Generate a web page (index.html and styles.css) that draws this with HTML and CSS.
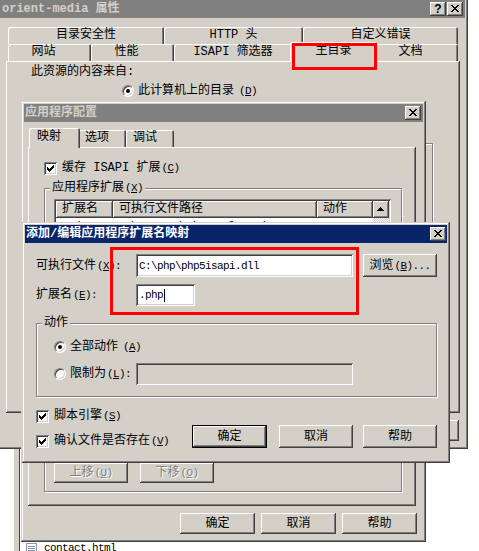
FILE: index.html
```html
<!DOCTYPE html>
<html lang="zh-CN">

<head>
    <meta charset="UTF-8">
    <meta name="viewport" content="width=device-width, initial-scale=1.0">
    <title>orient-media 属性</title>
    <link rel="stylesheet" href="styles.css">
</head>

<body>
    <div class="desk">
        <!-- explorer list behind the dialogs -->
        <div class="pane">
            <div class="file">
                <svg class="doc-icon" width="11" height="12" viewBox="0 0 11 12" shape-rendering="crispEdges">
                    <path d="M0.5 0.5h10v11h-10z" fill="#fff" stroke="#8a94a8" />
                    <path d="M2 3h7M2 5h7M2 7h7M2 9h7" stroke="#7d8fb8" />
                </svg>
                <span class="narrow">contact.html</span>
            </div>
        </div>

        <!-- orient-media 属性 -->
        <div class="win props">
            <div class="titlebar">
                <span class="title">orient-media 属性</span>
                <span class="tbtn help">?</span>
                <span class="tbtn close">
                    <svg width="16" height="14" viewBox="0 0 16 14" shape-rendering="crispEdges">
                        <path d="M4 3h2v1h-2zM10 3h2v1h-2zM5 4h2v1h-2zM9 4h2v1h-2zM6 5h4v1h-4zM7 6h2v1h-2zM6 7h4v1h-4zM5 8h2v1h-2zM9 8h2v1h-2zM4 9h2v1h-2zM10 9h2v1h-2z" />
                    </svg>
                </span>
            </div>
            <div class="props-tabs">
                <div class="tabrow">
                    <div class="tab tab-sec">目录安全性</div>
                    <div class="tab tab-http">HTTP 头</div>
                    <div class="tab tab-err">自定义错误</div>
                </div>
                <div class="tabrow">
                    <div class="tab tab-site">网站</div>
                    <div class="tab tab-perf">性能</div>
                    <div class="tab tab-isapi">ISAPI 筛选器</div>
                    <div class="tab sel tab-home">主目录</div>
                    <div class="tab tab-doc">文档</div>
                </div>
            </div>
            <div class="panel props-panel">
                <div class="line">此资源的内容来自:</div>
                <div class="opt src-opt"><span class="radio on"></span>此计算机上的目录<span class="key">(<u>D</u>)</span></div>
                <div class="group props-group"></div>
            </div>
            <div class="btnrow props-btns">
                <div class="btn">确定</div>
                <div class="btn">取消</div>
                <div class="btn">帮助</div>
            </div>
        </div>

        <!-- 应用程序配置 -->
        <div class="win appcfg">
            <div class="titlebar">
                <span class="title">应用程序配置</span>
                <span class="tbtn close">
                    <svg width="16" height="14" viewBox="0 0 16 14" shape-rendering="crispEdges">
                        <path d="M4 3h2v1h-2zM10 3h2v1h-2zM5 4h2v1h-2zM9 4h2v1h-2zM6 5h4v1h-4zM7 6h2v1h-2zM6 7h4v1h-4zM5 8h2v1h-2zM9 8h2v1h-2zM4 9h2v1h-2zM10 9h2v1h-2z" />
                    </svg>
                </span>
            </div>
            <div class="tabrow cfg-tabs">
                <div class="tab sel cfg-map">映射</div>
                <div class="tab cfg-opt">选项</div>
                <div class="tab cfg-dbg">调试</div>
            </div>
            <div class="panel cfg-panel">
                <div class="chk-line">
                    <span class="chk">
                        <svg width="13" height="13" viewBox="0 0 13 13" shape-rendering="crispEdges">
                            <path d="M3 5h1v3h-1zM4 6h1v3h-1zM5 7h1v3h-1zM6 6h1v3h-1zM7 5h1v3h-1zM8 4h1v3h-1zM9 3h1v3h-1z" />
                        </svg>
                    </span>
                    <span>缓存 ISAPI 扩展<span class="key">(<u>C</u>)</span></span>
                </div>
                <div class="group ext-group">
                    <span class="group-label">应用程序扩展<span class="key">(<u>X</u>)</span></span>
                    <div class="list">
                        <div class="list-main">
                            <div class="list-head">
                                <span class="hcell c1">扩展名</span>
                                <span class="hcell c2">可执行文件路径</span>
                                <span class="hcell c3">动作</span>
                            </div>
                            <div class="list-row narrow">
                                <span class="cell c1">.ad</span>
                                <span class="cell c2">C:\WINDOWS\Microsoft.NET\Framework\v2.0.50727\aspnet_isapi.dll</span>
                                <span class="cell c3">GET,HEAD,POST</span>
                            </div>
                        </div>
                        <div class="vscroll">
                            <span class="sbtn">
                                <svg width="16" height="17" viewBox="0 0 16 17" shape-rendering="crispEdges">
                                    <path d="M7 6h1v1h-1zM6 7h3v1h-3zM5 8h5v1h-5zM4 9h7v1h-7z" />
                                </svg>
                            </span>
                            <span class="track"></span>
                        </div>
                    </div>
                    <div class="btnrow move-btns">
                        <div class="btn off">上移<span class="key">(<u>U</u>)</span></div>
                        <div class="btn off">下移<span class="key">(<u>O</u>)</span></div>
                    </div>
                </div>
            </div>
            <div class="btnrow cfg-btns">
                <div class="btn">确定</div>
                <div class="btn">取消</div>
                <div class="btn">帮助</div>
            </div>
        </div>

        <!-- 添加/编辑应用程序扩展名映射 -->
        <div class="win active edit">
            <div class="titlebar">
                <span class="title">添加/编辑应用程序扩展名映射</span>
                <span class="tbtn close">
                    <svg width="16" height="14" viewBox="0 0 16 14" shape-rendering="crispEdges">
                        <path d="M4 3h2v1h-2zM10 3h2v1h-2zM5 4h2v1h-2zM9 4h2v1h-2zM6 5h4v1h-4zM7 6h2v1h-2zM6 7h4v1h-4zM5 8h2v1h-2zM9 8h2v1h-2zM4 9h2v1h-2zM10 9h2v1h-2z" />
                    </svg>
                </span>
            </div>
            <div class="edit-body">
                <div class="field-row">
                    <span class="flabel">可执行文件<span class="key">(<u>X</u>):</span></span>
                    <span class="input path-input narrow">C:\php\php5isapi.dll</span>
                    <div class="btn browse">浏览<span class="key">(<u>B</u>)...</span></div>
                </div>
                <div class="field-row ext-row">
                    <span class="flabel">扩展名<span class="key">(<u>E</u>):</span></span>
                    <span class="input ext-input"><span class="narrow">.php</span><span class="caret"></span></span>
                </div>
                <div class="group verb-group">
                    <span class="group-label">动作</span>
                    <div class="opt"><span class="radio on"></span>全部动作<span class="key">(<u>A</u>)</span></div>
                    <div class="opt limit-row">
                        <span class="radio"></span>
                        <span class="limit-label">限制为<span class="key">(<u>L</u>):</span></span>
                        <span class="input off limit-input"></span>
                    </div>
                </div>
                <div class="edit-foot">
                    <div class="checks">
                        <div class="chk-line">
                            <span class="chk">
                                <svg width="13" height="13" viewBox="0 0 13 13" shape-rendering="crispEdges">
                                    <path d="M3 5h1v3h-1zM4 6h1v3h-1zM5 7h1v3h-1zM6 6h1v3h-1zM7 5h1v3h-1zM8 4h1v3h-1zM9 3h1v3h-1z" />
                                </svg>
                            </span>
                            <span>脚本引擎<span class="key">(<u>S</u>)</span></span>
                        </div>
                        <div class="chk-line second">
                            <span class="chk">
                                <svg width="13" height="13" viewBox="0 0 13 13" shape-rendering="crispEdges">
                                    <path d="M3 5h1v3h-1zM4 6h1v3h-1zM5 7h1v3h-1zM6 6h1v3h-1zM7 5h1v3h-1zM8 4h1v3h-1zM9 3h1v3h-1z" />
                                </svg>
                            </span>
                            <span>确认文件是否存在<span class="key">(<u>V</u>)</span></span>
                        </div>
                    </div>
                    <div class="btnrow edit-btns">
                        <div class="btn def">确定</div>
                        <div class="btn">取消</div>
                        <div class="btn">帮助</div>
                    </div>
                </div>
            </div>
        </div>

        <!-- red marks drawn on the screenshot -->
        <div class="mark mark-tab"></div>
        <div class="mark mark-fields"></div>
    </div>
</body>

</html>
```

FILE: styles.css
```css
* {
    margin: 0;
    padding: 0;
    box-sizing: border-box;
}

body {
    background: #fff;
    font-family: "Liberation Mono", "Noto Sans CJK SC", monospace;
    font-size: 12px;
    line-height: 14px;
    color: #000;
}

.desk {
    position: relative;
    width: 479px;
    height: 551px;
    overflow: hidden;
}

u {
    text-underline-offset: 1px;
}

.narrow,
.key {
    font-size: 11px;
    letter-spacing: -0.6px;
}

.key {
    margin-left: 1px;
}

/* explorer list */
.pane {
    position: absolute;
    left: 14px;
    top: 448px;
    width: 465px;
    height: 103px;
    background: #fff;
    border-left: 5px solid #d4d0c8;
    box-shadow: inset 1px 0 #404040;
    padding: 93px 0 0 7px;
}

.file {
    display: flex;
    align-items: flex-start;
    gap: 7px;
}

.doc-icon {
    margin-top: 2px;
}

/* windows */
.win {
    position: absolute;
    padding: 3px;
    background: #d4d0c8;
    box-shadow: inset -1px -1px #404040, inset 1px 1px #d4d0c8, inset -2px -2px #808080, inset 2px 2px #fff;
}

.props {
    left: -3px;
    top: -3px;
    width: 471px;
    height: 452px;
}

.appcfg {
    left: 21px;
    top: 101px;
    width: 405px;
    height: 441px;
}

.edit {
    left: 22px;
    top: 222px;
    width: 428px;
    height: 241px;
}

.titlebar {
    display: flex;
    align-items: center;
    height: 18px;
    padding: 0 2px 0 1px;
    background: #808080;
    color: #d4d0c8;
    font-weight: bold;
}

.props .titlebar {
    padding-left: 2px;
}

.active .titlebar {
    background: #0a246a;
    color: #fff;
    padding-right: 1px;
}

.title {
    flex: 1;
    white-space: nowrap;
    line-height: 18px;
}

.tbtn {
    display: flex;
    align-items: center;
    justify-content: center;
    width: 16px;
    height: 14px;
    color: #000;
    background: #d4d0c8;
    box-shadow: inset -1px -1px #404040, inset 1px 1px #fff, inset -2px -2px #808080;
}

.help {
    margin-right: 1px;
    font: bold 12px "Liberation Sans", sans-serif;
}

/* raised / sunken pieces */
.btn {
    display: flex;
    align-items: center;
    justify-content: center;
    width: 75px;
    height: 21px;
    white-space: nowrap;
    background: #d4d0c8;
    box-shadow: inset -1px -1px #404040, inset 1px 1px #fff, inset -2px -2px #808080;
}

.btn.off {
    color: #808080;
    text-shadow: 1px 1px #fff;
}

.btn.def {
    border: 1px solid #000;
}

.btnrow {
    display: flex;
}

.panel {
    background: #d4d0c8;
    box-shadow: inset -1px -1px #404040, inset 1px 1px #fff, inset -2px -2px #808080;
}

.input {
    display: flex;
    align-items: center;
    padding: 0 3px;
    background: #fff;
    box-shadow: inset 1px 1px #808080, inset -1px -1px #fff, inset 2px 2px #404040, inset -2px -2px #d4d0c8;
    white-space: nowrap;
}

.input.off {
    background: #d4d0c8;
}

.group {
    position: relative;
    border: 1px solid #808080;
    box-shadow: inset 1px 1px #fff, 1px 1px #fff;
}

.group-label {
    position: absolute;
    top: -8px;
    left: 5px;
    padding: 0 2px;
    background: #d4d0c8;
    white-space: nowrap;
}

/* tabs */
.tabrow {
    display: flex;
    height: 17px;
}

.tab {
    height: 17px;
    line-height: 17px;
    text-align: center;
    white-space: nowrap;
    background: #d4d0c8;
    border-radius: 2px 2px 0 0;
    box-shadow: inset 1px 1px #fff, inset -1px 0 #404040, inset -2px 0 #808080;
}

.tab.sel {
    position: relative;
    z-index: 2;
    height: 20px;
    line-height: 18px;
    margin: -2px -2px 0;
}

.props-tabs {
    margin: 9px 0 0 8px;
    width: 450px;
}

.tab-sec {
    width: 156px;
}

.tab-http {
    width: 139px;
}

.tab-err {
    width: 155px;
}

.tab-site,
.tab-perf,
.tab-doc {
    width: 83px;
    padding-right: 12px;
}

.tab-isapi {
    width: 118px;
}

.tab-home {
    width: 87px;
}

/* radio / check */
.opt {
    display: flex;
    align-items: center;
    gap: 4px;
    height: 14px;
    white-space: nowrap;
}

.radio {
    position: relative;
    flex: none;
    width: 12px;
    height: 12px;
    border-radius: 50%;
    background: #fff;
    border: 1px solid;
    border-color: #808080 #fff #fff #808080;
    box-shadow: inset 1px 1px #404040, inset -1px -1px #d4d0c8;
}

.radio.on::after {
    content: "";
    position: absolute;
    left: 3px;
    top: 3px;
    width: 4px;
    height: 4px;
    border-radius: 50%;
    background: #000;
}

.chk-line {
    display: flex;
    align-items: center;
    gap: 5px;
    height: 14px;
    white-space: nowrap;
}

.chk {
    flex: none;
    width: 13px;
    height: 13px;
    background: #fff;
    box-shadow: inset 1px 1px #808080, inset -1px -1px #fff, inset 2px 2px #404040, inset -2px -2px #d4d0c8;
}

.chk svg {
    display: block;
}

/* orient-media 属性 */
.props-panel {
    margin-left: 6px;
    width: 454px;
    height: 352px;
    padding: 4px 0 0 25px;
}

.src-opt {
    margin: 5px 0 0 91px;
}

.props-group {
    margin: 45px 0 0 -1px;
    width: 403px;
    height: 257px;
}

.props-btns {
    justify-content: flex-end;
    gap: 6px;
    margin-top: 7px;
    padding-right: 6px;
}

/* 应用程序配置 */
.cfg-tabs {
    margin: 8px 0 0 7px;
}

.cfg-tabs .tab {
    width: 48px;
    text-align: left;
    padding-left: 7px;
}

.cfg-tabs .cfg-map {
    width: 51px;
    padding-left: 8px;
}

.cfg-panel {
    margin-left: 4px;
    width: 388px;
    height: 359px;
    padding: 14px 0 0 16px;
}

.ext-group {
    margin-top: 13px;
    width: 358px;
    height: 304px;
    padding: 10px 0 0 9px;
}

.list {
    display: flex;
    width: 337px;
    height: 256px;
    padding: 2px;
    background: #fff;
    box-shadow: inset 1px 1px #808080, inset -1px -1px #fff, inset 2px 2px #404040, inset -2px -2px #d4d0c8;
}

.list-main {
    flex: 1;
    overflow: hidden;
}

.list-head,
.list-row {
    display: flex;
}

.hcell {
    flex: none;
    height: 17px;
    line-height: 17px;
    padding-left: 6px;
    background: #d4d0c8;
    box-shadow: inset -1px -1px #404040, inset 1px 1px #fff, inset -2px -2px #808080;
}

.c1 {
    width: 57px;
}

.c2 {
    width: 204px;
}

.c3 {
    width: 56px;
}

.list-row {
    height: 16px;
    line-height: 16px;
}

.cell {
    flex: none;
    overflow: hidden;
    white-space: nowrap;
    padding-left: 6px;
}

.vscroll {
    display: flex;
    flex-direction: column;
    width: 16px;
}

.sbtn {
    height: 17px;
    background: #d4d0c8;
    box-shadow: inset -1px -1px #404040, inset 1px 1px #fff, inset -2px -2px #808080;
}

.sbtn svg {
    display: block;
}

.track {
    flex: 1;
    background: repeating-conic-gradient(#d4d0c8 0 25%, #fff 0 50%) 0 0 / 2px 2px;
}

.move-btns {
    gap: 12px;
    margin-top: 8px;
}

.move-btns .btn {
    width: 74px;
    height: 20px;
}

.cfg-btns {
    justify-content: flex-end;
    gap: 6px;
    margin-top: 7px;
    padding-right: 6px;
}

/* 添加/编辑应用程序扩展名映射 */
.edit-body {
    padding: 11px 10px 0 11px;
}

.field-row {
    display: flex;
    align-items: center;
}

.flabel {
    width: 100px;
    white-space: nowrap;
}

.path-input {
    width: 217px;
    height: 23px;
}

.browse {
    width: 74px;
    height: 23px;
    margin-left: 10px;
}

.ext-row {
    margin-top: 7px;
}

.ext-input {
    width: 59px;
    height: 22px;
}

.caret {
    width: 1px;
    height: 13px;
    margin-left: 1px;
    background: #000;
}

.verb-group {
    margin-top: 17px;
    width: 401px;
    height: 74px;
    padding: 16px 0 0 17px;
}

.limit-row {
    height: 22px;
    margin-top: 9px;
}

.limit-label {
    width: 62px;
}

.limit-input {
    width: 217px;
    height: 22px;
}

.edit-foot {
    display: flex;
    justify-content: space-between;
    align-items: flex-end;
    margin-top: 12px;
}

.chk-line.second {
    margin-top: 11px;
}

.edit-btns {
    gap: 10px;
}

.edit-btns .btn {
    width: 74px;
    height: 23px;
}

.edit-btns .def {
    width: 75px;
    margin-right: 2px;
}

/* red marks */
.mark {
    position: absolute;
    z-index: 5;
    border: 3px solid #f00;
}

.mark-tab {
    left: 292px;
    top: 43px;
    width: 85px;
    height: 27px;
}

.mark-fields {
    left: 110px;
    top: 247px;
    width: 249px;
    height: 68px;
}
```
